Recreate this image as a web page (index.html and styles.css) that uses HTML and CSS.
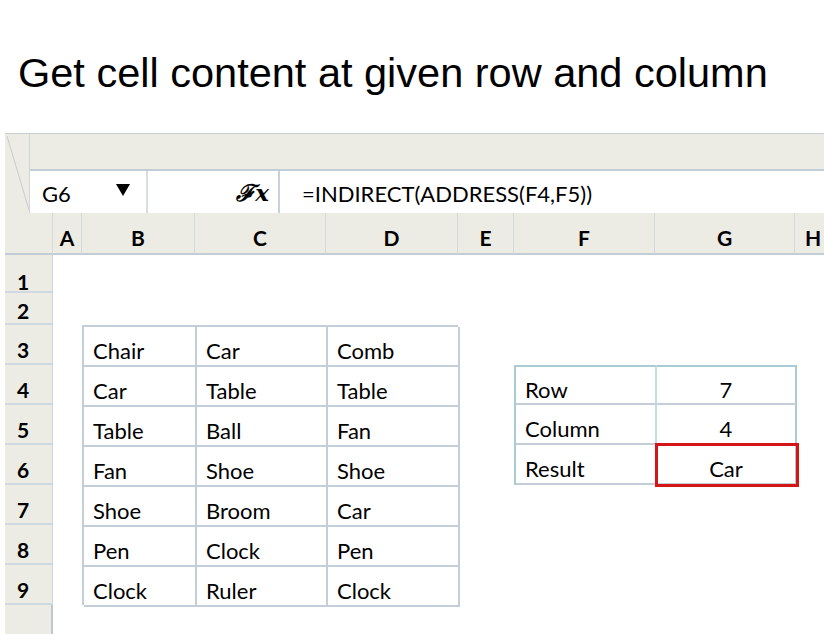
FILE: index.html
```html
<!DOCTYPE html>
<html>
<head>
<meta charset="utf-8">
<link rel="stylesheet" href="styles.css">
</head>
<body>
<h1 class="title">Get cell content at given row and column</h1>
<div class="sheet">
  <div class="toolbar">
    <div class="corner">
      <svg width="25" height="80" viewBox="0 0 25 80"><line x1="2" y1="2" x2="24" y2="76" stroke="#c8ccd0" stroke-width="1"/></svg>
    </div>
    <div class="band"></div>
    <div class="fbar">
      <div class="namebox"><span>G6</span>
        <svg class="tri" width="14" height="12" viewBox="0 0 14 12"><polygon points="0,0 14,0 7,12" fill="#000"/></svg>
      </div>
      <div class="fxbox"><span class="fx">ℱ<i>x</i></span></div>
      <div class="formula">=INDIRECT(ADDRESS(F4,F5))</div>
    </div>
  </div>
  <div class="grid">
    <div class="hd corner-hd"></div>
    <div class="hd col">A</div>
    <div class="hd col">B</div>
    <div class="hd col">C</div>
    <div class="hd col">D</div>
    <div class="hd col">E</div>
    <div class="hd col">F</div>
    <div class="hd col">G</div>
    <div class="hd col last">H</div>

    <div class="rh r1">1</div>
    <div class="rh r2">2</div>
    <div class="rh r3">3</div>
    <div class="rh r4">4</div>
    <div class="rh r5">5</div>
    <div class="rh r6">6</div>
    <div class="rh r7">7</div>
    <div class="rh r8">8</div>
    <div class="rh r9">9</div>
    <div class="rh r10"></div>

    <div class="data">
      <div class="c">Chair</div><div class="c">Car</div><div class="c">Comb</div>
      <div class="c">Car</div><div class="c">Table</div><div class="c">Table</div>
      <div class="c">Table</div><div class="c">Ball</div><div class="c">Fan</div>
      <div class="c">Fan</div><div class="c">Shoe</div><div class="c">Shoe</div>
      <div class="c">Shoe</div><div class="c">Broom</div><div class="c">Car</div>
      <div class="c">Pen</div><div class="c">Clock</div><div class="c">Pen</div>
      <div class="c">Clock</div><div class="c">Ruler</div><div class="c">Clock</div>
    </div>

    <div class="lookup">
      <div class="l lbl top">Row</div><div class="l val top">7</div>
      <div class="l lbl">Column</div><div class="l val">4</div>
      <div class="l lbl">Result</div><div class="l val result">Car</div>
    </div>
  </div>
</div>
</body>
</html>
```

FILE: styles.css
```css
html, body {
  margin: 0;
  padding: 0;
  background: #ffffff;
}
body {
  width: 824px;
  height: 634px;
  overflow: hidden;
  font-family: "Lato", "Liberation Sans", sans-serif;
  color: #000;
}
.title {
  box-sizing: border-box;
  height: 133px;
  margin: 0;
  padding: 50px 0 0 18px;
  font-family: "Liberation Sans", Arial, sans-serif;
  font-size: 41.5px;
  font-weight: normal;
  line-height: 46px;
  white-space: nowrap;
}
.sheet {
  margin-left: 5px;
  width: 819px;
}
.toolbar {
  display: grid;
  grid-template-columns: 25px 1fr;
  grid-template-rows: 37px 43px;
  border-top: 1px solid #c6ccd4;
  box-sizing: border-box;
  height: 80px;
}
.corner {
  grid-row: 1 / 3;
  background: #ecebe4;
  border-right: 1px solid #d2d6da;
  overflow: hidden;
}
.corner svg { display: block; }
.band {
  background: #ecebe4;
  border-bottom: 2px solid #c2cdd8;
}
.fbar {
  display: flex;
  background: #fff;
  border-bottom: 1px solid #c2cdd8;
}
.namebox {
  box-sizing: border-box;
  width: 118px;
  border-right: 2px solid #d8dde2;
  display: flex;
  align-items: center;
  padding-left: 12px;
  padding-top: 3px;
  font-size: 22px;
}
.namebox span { width: 74px; }
.tri { margin-top: -8px; }
.fxbox {
  box-sizing: border-box;
  width: 132px;
  border-right: 2px solid #c9d2dc;
  display: flex;
  align-items: center;
  justify-content: flex-end;
  padding-right: 9px;
}
.fx {
  font-family: "DejaVu Serif", serif;
  font-weight: bold;
  font-style: italic;
  font-size: 23px;
}
.fx i { font-style: italic; }
.formula {
  display: flex;
  align-items: center;
  padding-left: 22px;
  padding-top: 3px;
  font-size: 22px;
}
.grid {
  display: grid;
  grid-template-columns: 48px 29px 113px 131px 132px 56px 141px 140px 1fr;
  grid-template-rows: 42px 38px 32px repeat(7, 40px) 1fr;
  height: 421px;
}
.hd {
  grid-row: 1;
  background: #ecebe4;
  box-sizing: border-box;
  border-bottom: 2px solid #c2cdd8;
  border-right: 1px solid #d4d9de;
  display: flex;
  align-items: center;
  justify-content: center;
  font-weight: bold;
  font-size: 21px;
  padding-top: 9px;
}
.hd.last { border-right: none; justify-content: flex-start; padding-left: 10px; }
.rh {
  grid-column: 1;
  background: #ecebe4;
  box-sizing: border-box;
  border-bottom: 2px solid #d0d8e0;
  border-right: 1px solid #cdd5dd;
  display: flex;
  align-items: center;
  padding-left: 12px;
  padding-top: 10px;
  font-weight: bold;
  font-size: 21px;
}
.r1 { grid-row: 2; padding-top: 16px; }
.r2 { grid-row: 3; padding-top: 4px; }
.r3 { grid-row: 4; }
.r4 { grid-row: 5; }
.r5 { grid-row: 6; }
.r6 { grid-row: 7; }
.r7 { grid-row: 8; }
.r8 { grid-row: 9; }
.r9 { grid-row: 10; }
.r10 { grid-row: 11; border-bottom: none; border-right: 2px solid #b9c6d4; }
.data {
  grid-column: 3 / 6;
  grid-row: 4 / 11;
  display: grid;
  grid-template-columns: 113px 131px 132px;
  grid-template-rows: repeat(7, 40px);
  box-sizing: border-box;
  border-top: 2px solid #c3ced9;
  border-left: 2px solid #c3ced9;
}
.c {
  box-sizing: border-box;
  border-right: 2px solid #c3ced9;
  border-bottom: 2px solid #c3ced9;
  display: flex;
  align-items: center;
  padding: 9px 0 0 9px;
  font-size: 22px;
}
.lookup {
  grid-column: 7 / 9;
  grid-row: 5 / 8;
  display: grid;
  grid-template-columns: 141px 140px;
  grid-template-rows: repeat(3, 40px);
  border-left: 2px solid #a9cbd4;
  box-sizing: border-box;
}
.l {
  box-sizing: border-box;
  border-bottom: 2px solid #c3ced9;
  display: flex;
  align-items: center;
  font-size: 22px;
  padding-top: 9px;
}
.l.top { border-top: 2px solid #a9cbd4; }
.lbl {
  padding-left: 9px;
  border-right: 2px solid #c3dde4;
}
.val {
  justify-content: center;
  border-right: 2px solid #a9cbd4;
}
.result {
  outline: 3px solid #d41616;
  outline-offset: -1px;
  position: relative;
  z-index: 1;
}
```
